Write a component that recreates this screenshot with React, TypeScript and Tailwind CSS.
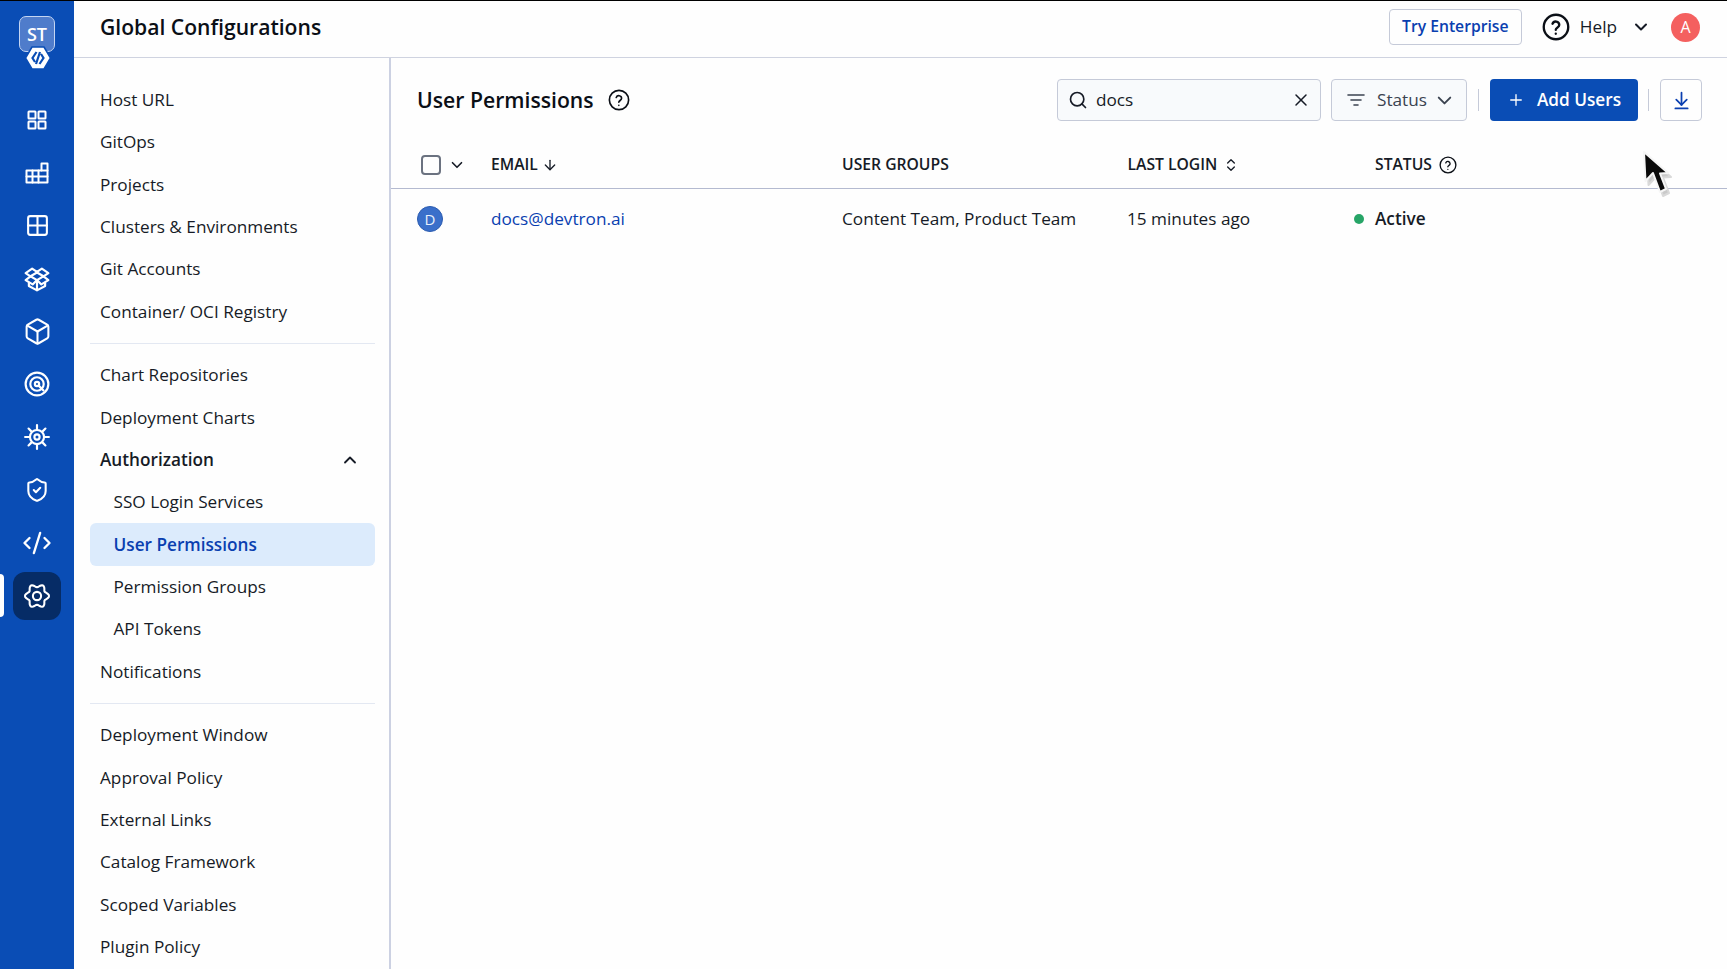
import { ArrowDownToLine, Box, ChevronDown, ChevronUp, ChevronsUpDown, CodeXml, Grid2x2, ArrowDown, Plus, Search, ShieldCheck, X } from "lucide-react";

const Rail = ({ children, active }: { children: React.ReactNode; active?: boolean }) => (
  <div className="relative h-[52.9px] w-full flex items-center justify-center">
    {active && <div className="absolute left-0 top-[4px] h-[43px] w-[4px] rounded-r-[4px] bg-white" />}
    <div className={"w-[48px] h-[48px] rounded-[12px] flex items-center justify-center " + (active ? "bg-[#062c66]" : "")}>{children}</div>
  </div>
);

const ic = { width: 24, height: 24, viewBox: "0 0 24 24", fill: "none", stroke: "white", strokeWidth: 2, strokeLinejoin: "round" as const, strokeLinecap: "round" as const };

const Four = () => (
  <svg {...ic}>
    <rect x="3.5" y="3.5" width="7" height="7" rx="0.5" /><rect x="13.5" y="3.5" width="7" height="7" rx="0.5" />
    <rect x="3.5" y="13.5" width="7" height="7" rx="0.5" /><rect x="13.5" y="13.5" width="7" height="7" rx="0.5" />
  </svg>
);
const Cluster = () => (
  <svg {...ic}>
    <path d="M1.5 9.5h15V2.5h6v19h-21z" /><path d="M1.5 15.5h21M7.5 9.5v12M13.5 9.5v12M16.5 9.5h6" />
  </svg>
);
const OpenBox = () => (
  <svg {...ic} width={26} height={26}>
    <path d="M12 6 6 9.5 12 13 18 9.5z" /><path d="M6 9.5 1.5 6.5 7.5 2.5 12 5.5 16.5 2.5 22.5 6.5 18 9.5" />
    <path d="M6 9.5 1.5 13 8 17 12 13 16 17 22.5 13 18 9.5" /><path d="M4.5 15.5v3L12 22.5l7.5-4v-3M12 13v9.5" />
  </svg>
);
const Target = () => (
  <svg {...ic} width={26} height={26}>
    <circle cx="12" cy="12" r="10.5" /><circle cx="12" cy="12" r="6.2" /><circle cx="12" cy="12" r="2" /><path d="M13.5 13.5 18 18" />
  </svg>
);
const Wheel = () => (
  <svg {...ic} width={26} height={26}>
    <circle cx="12" cy="12" r="6.5" /><circle cx="12" cy="12" r="2.4" />
    <path d="M12 1v4M12 19v4M1 12h4M19 12h4M4.2 4.2l2.6 2.6M17.2 17.2l2.6 2.6M4.2 19.8l2.6-2.6M17.2 6.8l2.6-2.6" />
  </svg>
);
const flowerPath = () => {
  const pts: string[] = [];
  for (let i = 0; i < 72; i++) {
    const t = (i / 72) * Math.PI * 2;
    const r = 9.6 + 1.5 * Math.cos(6 * t);
    pts.push(`${(12 + r * Math.cos(t)).toFixed(2)} ${(12 + r * Math.sin(t)).toFixed(2)}`);
  }
  return "M" + pts.join("L") + "Z";
};
const Gear = () => (
  <svg {...ic} width={26} height={26} strokeWidth={1.9}>
    <path d={flowerPath()} /><circle cx="12" cy="12" r="3.8" />
  </svg>
);
const HelpCircle = ({ size, sw }: { size: number; sw: number }) => (
  <svg width={size} height={size} viewBox="0 0 24 24" fill="none" stroke="#0b0f16" strokeWidth={sw} strokeLinecap="round" strokeLinejoin="round">
    <circle cx="12" cy="12" r="10.5" />
    <path d="M9 9.2a3 3 0 0 1 5.8 1c0 2-3 2.6-3 4.2" /><path d="M11.8 17.8h.02" />
  </svg>
);
const FilterIcon = () => (
  <svg width="18" height="14" viewBox="0 0 18 14" fill="none" stroke="#3b4350" strokeWidth="1.6" strokeLinecap="round">
    <path d="M1 2h16M4 7h10M7 12h4" />
  </svg>
);
const Cursor = () => (
  <svg width="40" height="56" viewBox="0 0 40 56" className="absolute left-[1640px] top-[148px]">
    <path d="M7 8 8.5 37 16 29 23 48 29 45 23 29.500 31 29Z" fill="#c9c9c9" stroke="#d9d9d9" strokeWidth="2" strokeLinejoin="round" />
    <path d="M4 4 5.500 33 13 25 20 44 26 41 20 25.500 28 25Z" fill="#0a0a0a" stroke="#f6f6f6" strokeWidth="2" strokeLinejoin="round" />
  </svg>
);

const Item = ({ label, sub, active, bold }: { label: string; sub?: boolean; active?: boolean; bold?: boolean }) => (
  <div className={"h-[42.35px] flex items-center justify-between rounded-[6px] text-[17.2px] " + (sub ? "pl-[23.5px] " : "pl-[10px] ") + (active ? "bg-[#dcebfc] text-[#0a3fb0] font-semibold " : "text-[#161b26] ") + (bold ? "font-semibold" : "")}>
    <span>{label}</span>
    {bold && <ChevronUp size={20} strokeWidth={2.2} className="mr-[15px] text-[#161b26]" />}
  </div>
);
const Sep = () => <div className="my-[10.1px] h-px bg-[#e3e8f2]" />;

export default function App() {
  return (
    <div className="h-[969px] w-full overflow-hidden flex flex-col bg-[#fefefe] font-['Open_Sans',sans-serif] relative">
      <div className="h-px bg-black shrink-0" />
      <div className="flex flex-1 min-h-0">
        <aside className="w-[74px] shrink-0 bg-[#0a4db5] flex flex-col">
          <div className="h-[92.5px] relative flex justify-center pt-[15px]">
            <div className="w-[36px] h-[36px] rounded-[7px] border border-[#c4d5f2] bg-[#4f7ccb] text-white font-semibold text-[18px] flex items-center justify-center">ST</div>
            <svg width="26" height="24" viewBox="0 0 26 24" className="absolute left-[25px] top-[45px]">
              <path d="M7 1h12l6.500 11L19 23H7L.5 12z" fill="white" stroke="#0a4db5" strokeWidth="1.5" strokeLinejoin="round" />
              <path d="M11.500 6 7.500 12l2.500 4M14.500 18l4-6-2.500-4M15 6l-4 12" fill="none" stroke="#0a4db5" strokeWidth="2.200" />
            </svg>
          </div>
          <Rail><Four /></Rail>
          <Rail><Cluster /></Rail>
          <Rail><Grid2x2 size={25} color="white" strokeWidth={2} /></Rail>
          <Rail><OpenBox /></Rail>
          <Rail><Box size={29} color="white" strokeWidth={1.7} /></Rail>
          <Rail><Target /></Rail>
          <Rail><Wheel /></Rail>
          <Rail><ShieldCheck size={26} color="white" strokeWidth={1.9} /></Rail>
          <Rail><CodeXml size={30} color="white" strokeWidth={1.9} /></Rail>
          <Rail active><Gear /></Rail>
        </aside>
        <div className="flex-1 min-w-0 flex flex-col">
          <header className="h-[57px] shrink-0 border-b border-[#cfd3e0] flex items-center pl-[26px] pr-[27px] pb-[4px]">
            <h1 className="text-[21.1px] font-semibold text-[#0b0f16] flex-1">Global Configurations</h1>
            <div className="w-[133px] h-[36px] rounded-[4px] border border-[#c5cad8] flex items-center justify-center text-[#0a3fb0] font-semibold text-[15.7px]">Try Enterprise</div>
            <div className="ml-[20px]"><HelpCircle size={28} sw={2} /></div>
            <span className="ml-[10px] text-[17.2px] text-[#161b26]">Help</span>
            <ChevronDown size={20} strokeWidth={2.4} className="ml-[14px] text-[#161b26]" />
            <div className="ml-[20px] w-[29px] h-[29px] rounded-full bg-[#f4605f] text-white text-[16px] flex items-center justify-center">A</div>
          </header>
          <div className="flex flex-1 min-h-0">
            <nav className="w-[317px] shrink-0 border-r-2 border-[#ccd1e2] pl-[16px] pr-[14px] pt-[20.8px] overflow-hidden">
              <Item label="Host URL" />
              <Item label="GitOps" />
              <Item label="Projects" />
              <Item label="Clusters & Environments" />
              <Item label="Git Accounts" />
              <Item label="Container/ OCI Registry" />
              <Sep />
              <Item label="Chart Repositories" />
              <Item label="Deployment Charts" />
              <Item label="Authorization" bold />
              <Item label="SSO Login Services" sub />
              <Item label="User Permissions" sub active />
              <Item label="Permission Groups" sub />
              <Item label="API Tokens" sub />
              <Item label="Notifications" />
              <Sep />
              <Item label="Deployment Window" />
              <Item label="Approval Policy" />
              <Item label="External Links" />
              <Item label="Catalog Framework" />
              <Item label="Scoped Variables" />
              <Item label="Plugin Policy" />
            </nav>
            <main className="flex-1 min-w-0 flex flex-col">
              <div className="h-[84px] shrink-0 flex items-center pl-[26px] pr-[25px]">
                <h2 className="text-[21.2px] font-semibold text-[#0b0f16]">User Permissions</h2>
                <div className="ml-[14px]"><HelpCircle size={22} sw={1.8} /></div>
                <div className="flex-1" />
                <div className="w-[264px] h-[42px] rounded-[4px] border border-[#c5cad8] bg-[#f8fafc] flex items-center pl-[10px] pr-[9px] text-[17.2px] text-[#161b26]">
                  <Search size={20} strokeWidth={2} />
                  <span className="ml-[8px] flex-1">docs</span>
                  <X size={20} strokeWidth={1.8} />
                </div>
                <div className="ml-[10px] w-[136px] h-[42px] rounded-[4px] border border-[#c5cad8] bg-[#f8fafc] flex items-center pl-[15px] pr-[10px] text-[17.2px] text-[#3b4350]">
                  <FilterIcon />
                  <span className="ml-[12px] flex-1">Status</span>
                  <ChevronDown size={23} strokeWidth={2} />
                </div>
                <div className="ml-[11px] w-px h-[22px] bg-[#c5cad8]" />
                <div className="ml-[11px] w-[148px] h-[42px] rounded-[4px] bg-[#0a4db5] text-white font-semibold text-[17.2px] flex items-center justify-center gap-[12px]">
                  <Plus size={18} strokeWidth={1.8} />
                  <span>Add Users</span>
                </div>
                <div className="ml-[10px] w-px h-[22px] bg-[#c5cad8]" />
                <div className="ml-[11px] w-[42px] h-[42px] rounded-[4px] border border-[#c5cad8] flex items-center justify-center text-[#0a3fb0]">
                  <ArrowDownToLine size={21} strokeWidth={2} />
                </div>
              </div>
              <div className="h-[47px] shrink-0 border-b border-[#b4bad0] flex items-center text-[15.7px] font-semibold text-[#161b26] pl-[30px]">
                <div className="w-[20px] h-[20px] rounded-[4px] border-2 border-[#6b7280]" />
                <ChevronDown size={18} strokeWidth={2.2} className="ml-[7px]" />
                <div className="ml-[25px] w-[351px] flex items-center gap-[4px]">EMAIL <ArrowDown size={16} strokeWidth={2} /></div>
                <div className="w-[285.5px]">USER GROUPS</div>
                <div className="w-[247.5px] flex items-center gap-[6px]">LAST LOGIN <ChevronsUpDown size={16} strokeWidth={2} /></div>
                <div className="flex items-center gap-[7px]">STATUS <HelpCircle size={18} sw={1.8} /></div>
              </div>
              <div className="h-[60px] shrink-0 flex items-center text-[17.2px] text-[#161b26] pl-[26px]">
                <div className="w-[26px] h-[26px] rounded-full bg-[#3a6fca] border border-[#2a5bb0] text-[#e8effb] text-[15px] flex items-center justify-center">D</div>
                <div className="ml-[48px] w-[351px] text-[#0a3fb0]">docs@devtron.ai</div>
                <div className="w-[285px]">Content Team, Product Team</div>
                <div className="w-[227px]">15 minutes ago</div>
                <div className="w-[10px] h-[10px] rounded-full bg-[#27a567]" />
                <div className="ml-[11px] font-semibold">Active</div>
              </div>
            </main>
          </div>
        </div>
      </div>
      <Cursor />
    </div>
  );
}
